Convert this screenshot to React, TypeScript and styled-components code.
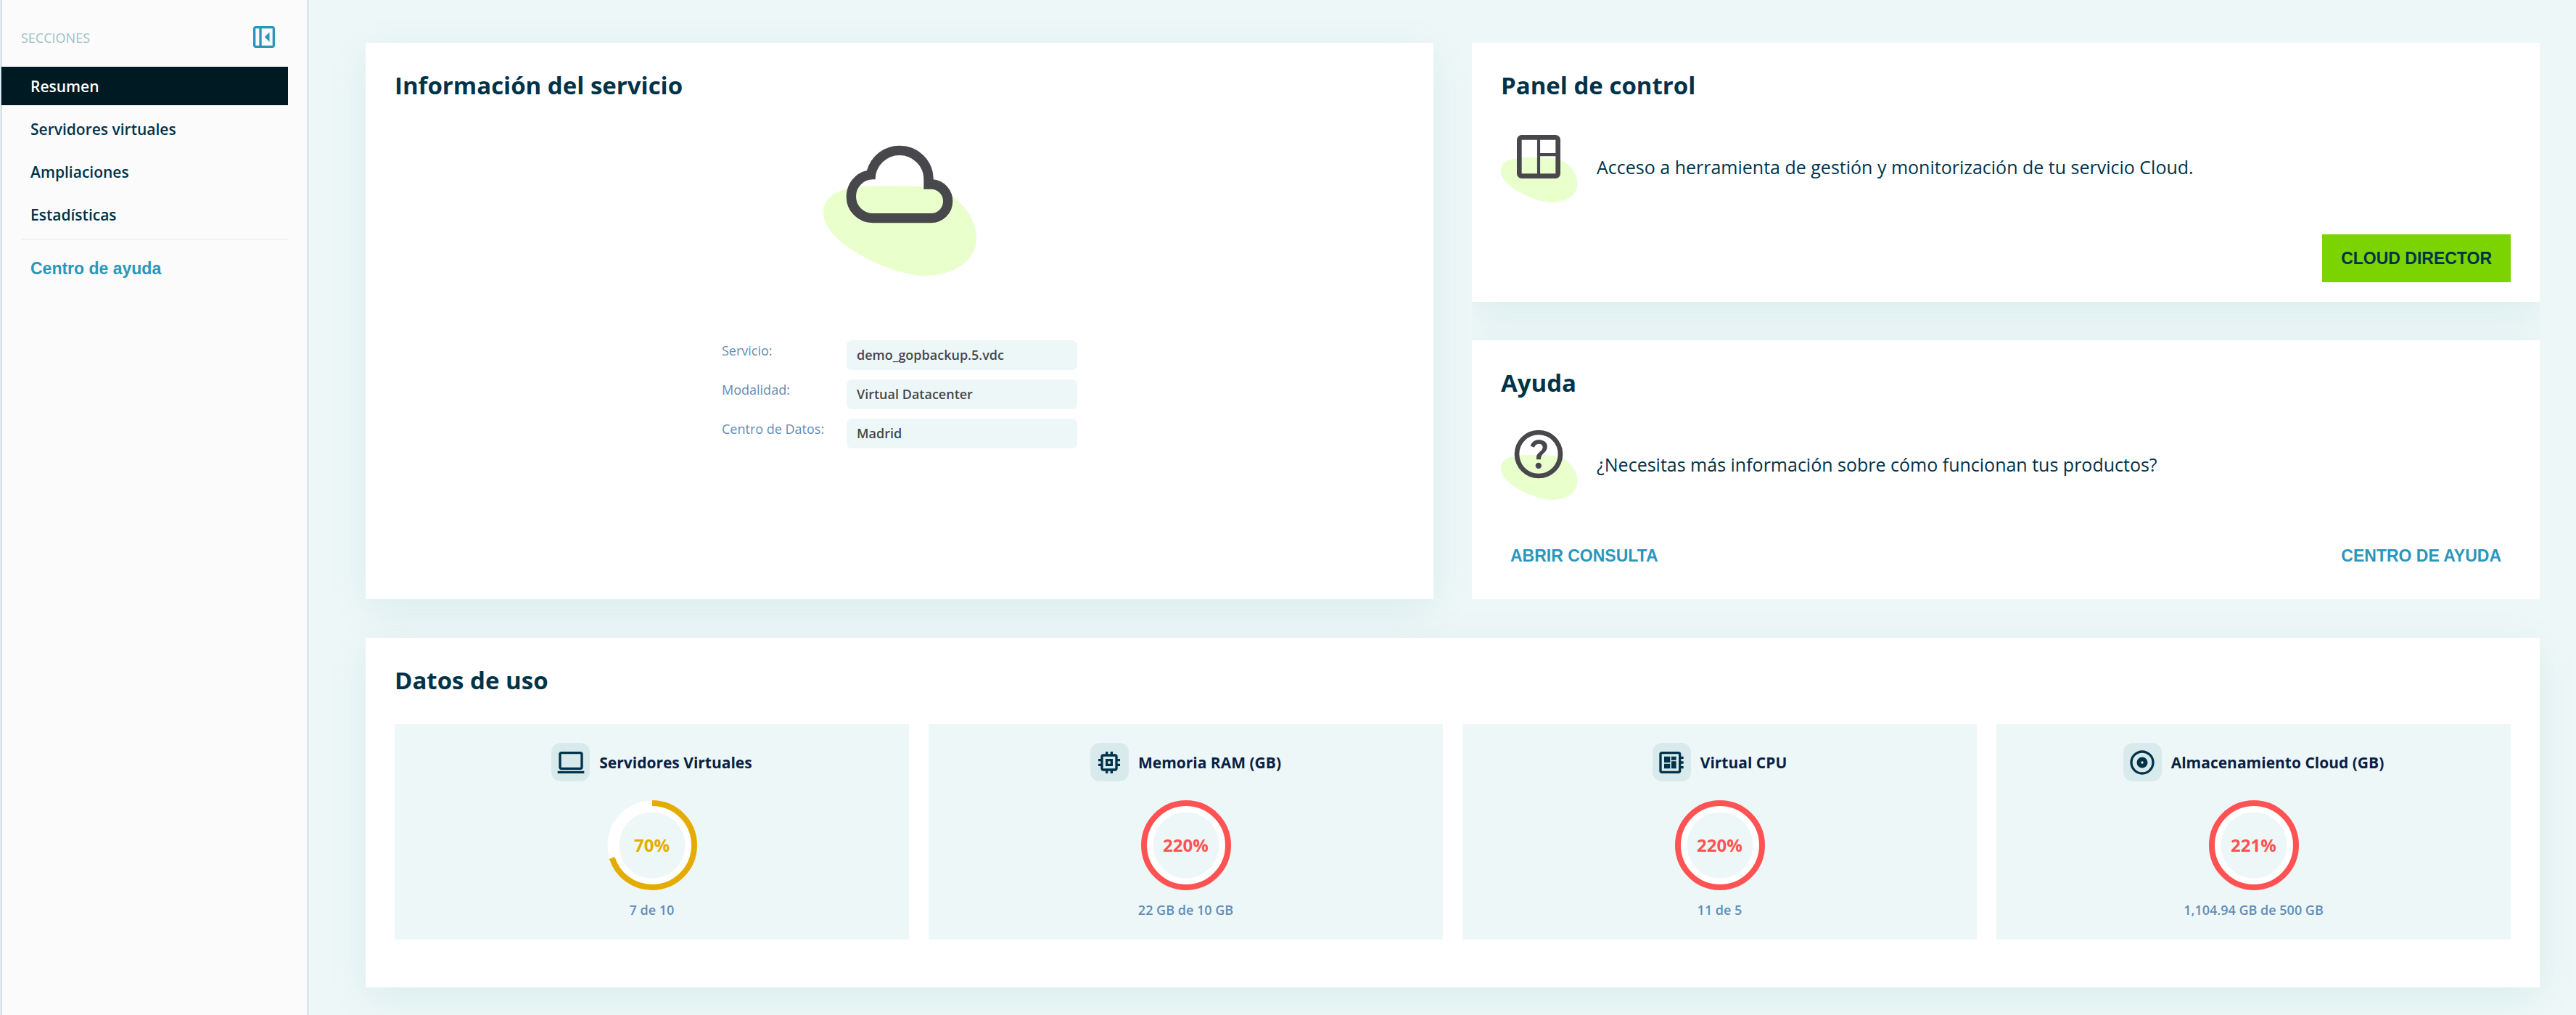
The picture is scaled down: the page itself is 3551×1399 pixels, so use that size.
import React from "react";
import styled, { createGlobalStyle } from "styled-components";

const sans = `"Open Sans", "Noto Sans", sans-serif`;
const arial = `"Liberation Sans", Arial, sans-serif`;

const GlobalStyle = createGlobalStyle`
  *, *::before, *::after { box-sizing: border-box; }
  body { margin: 0; background: #eef7f8; font-family: ${sans}; color: #003349; }
  h2, h3, p, ul, dl, dd { margin: 0; padding: 0; }
`;

const Page = styled.div`
  display: flex;
  min-height: 100vh;
  padding-left: 1px;
`;

const Sidebar = styled.aside`
  flex: 0 0 424px;
  background: #fbfbfb;
  border: solid #9dc0c9;
  border-width: 0 1px;
  padding: 31px 27px 0 0;
`;

const SidebarHead = styled.div`
  display: flex;
  align-items: center;
  justify-content: space-between;
  height: 40px;
  margin-bottom: 21px;
  padding: 0 13px 0 27px;
`;

const SidebarLabel = styled.span`
  padding-top: 2px;
  font-size: 18px;
  line-height: 24px;
  color: #9dc0c9;
`;

const IconButton = styled.button`
  display: flex;
  border: 0;
  padding: 0;
  background: none;
  color: #2a96bb;
  cursor: pointer;
`;

const Menu = styled.ul`
  display: flex;
  flex-direction: column;
  gap: 6px;
  list-style: none;
`;

const MenuLink = styled.a<{ $active?: boolean }>`
  display: block;
  padding: 2px 0 0 40px;
  font-size: 21px;
  font-weight: 600;
  line-height: 51px;
  text-decoration: none;
  color: ${(p) => (p.$active ? "#ffffff" : "#003349")};
  background: ${(p) => (p.$active ? "#001a24" : "transparent")};
`;

const SidebarFoot = styled.div`
  margin: 7px 0 0 27px;
  padding: 26px 0 0 13px;
  border-top: 1px solid #dbe8ec;
`;

const TextLink = styled.a`
  font-family: ${arial};
  font-size: 23px;
  font-weight: 700;
  line-height: 28px;
  text-decoration: none;
  color: #2a96bb;
`;

const Main = styled.main`
  flex: 1;
  min-width: 0;
  display: flex;
  flex-direction: column;
  gap: 53px;
  padding: 59px 50px 40px 79px;
`;

const TopRow = styled.div`
  display: grid;
  grid-template-columns: 1fr 1fr;
  gap: 53px;
`;

const Stack = styled.div`
  display: flex;
  flex-direction: column;
  gap: 53px;
  overflow: hidden;
`;

const Card = styled.section`
  display: flex;
  flex-direction: column;
  padding: 37px 40px 27px;
  background: #ffffff;
  box-shadow: 0 13px 53px rgba(0, 128, 115, 0.09);
`;

const UsageCard = styled(Card)`
  padding-bottom: 66px;
`;

const Title = styled.h2`
  font-size: 33px;
  font-weight: 700;
  line-height: 44px;
  color: #003349;
`;

const InfoBody = styled.div`
  display: flex;
  flex-direction: column;
  align-items: center;
  padding-top: 34px;
`;

const Fields = styled.dl`
  display: grid;
  grid-template-columns: 172px 318px;
  row-gap: 13px;
  margin-top: 89px;
`;

const FieldName = styled.dt`
  font-size: 18px;
  line-height: 29px;
  color: #5f8db8;
`;

const FieldValue = styled.dd`
  padding-left: 14px;
  border-radius: 7px;
  background: #eef7f8;
  font-size: 18px;
  font-weight: 600;
  line-height: 41px;
  color: #48474c;
`;

const Notice = styled.div`
  display: flex;
  align-items: center;
  gap: 26px;
  margin-top: 35px;
`;

const NoticeText = styled.p`
  font-size: 25px;
  line-height: 32px;
`;

const Actions = styled.div`
  display: flex;
  justify-content: space-between;
  margin-top: 39px;
`;

const Button = styled.button<{ $solid?: boolean }>`
  height: 66px;
  margin-left: ${(p) => (p.$solid ? "auto" : "0")};
  padding: 0 ${(p) => (p.$solid ? "26px" : "13px")};
  border: 0;
  background: ${(p) => (p.$solid ? "#7bd300" : "none")};
  font-family: ${arial};
  font-size: 23px;
  font-weight: 700;
  color: ${(p) => (p.$solid ? "#003349" : "#2a96bb")};
  cursor: pointer;
`;

const Tiles = styled.div`
  display: grid;
  grid-template-columns: repeat(4, 1fr);
  gap: 27px;
  margin-top: 38px;
`;

const Tile = styled.article`
  display: flex;
  flex-direction: column;
  align-items: center;
  padding: 26px 0 27px;
  background: #eef7f8;
`;

const TileHead = styled.div`
  display: flex;
  align-items: center;
  gap: 13px;
`;

const IconBox = styled.span`
  display: flex;
  align-items: center;
  justify-content: center;
  width: 53px;
  height: 53px;
  border-radius: 13px;
  background: #d9eaec;
  color: #003349;
`;

const TileTitle = styled.h3`
  font-size: 21px;
  font-weight: 700;
  line-height: 28px;
  color: #0a1f44;
`;

const Ring = styled.div`
  display: grid;
  place-items: center;
  margin-top: 26px;

  > * { grid-area: 1 / 1; }
`;

const Percent = styled.strong<{ $color: string }>`
  font-size: 24px;
  font-weight: 700;
  line-height: 32px;
  color: ${(p) => p.$color};
`;

const Caption = styled.p`
  margin-top: 13px;
  font-size: 18px;
  font-weight: 600;
  line-height: 28px;
  color: #5f8db8;
`;

/* Icons */

const SYMBOLS = {
  panelClose:
    "M660-320v-320L500-480l160 160ZM200-120q-33 0-56.5-23.5T120-200v-560q0-33 23.5-56.5T200-840h560q33 0 56.5 23.5T840-760v560q0 33-23.5 56.5T760-120H200Zm120-80v-560H200v560h120Zm80 0h360v-560H400v560Z",
  cloud:
    "M260-160q-91 0-155.5-63T40-377q0-78 47-139t123-78q25-92 100-149t170-57q117 0 198.5 81.5T760-520q69 8 114.5 59.5T920-340q0 75-52.5 127.5T740-160H260Zm0-80h480q42 0 71-29t29-71q0-42-29-71t-71-29h-60v-80q0-83-58.5-141.5T480-720q-83 0-141.5 58.5T280-520h-20q-58 0-99 41t-41 99q0 58 41 99t99 41Z",
  dashboard:
    "M200-120q-33 0-56.5-23.5T120-200v-560q0-33 23.5-56.5T200-840h560q33 0 56.5 23.5T840-760v560q0 33-23.5 56.5T760-120H200Zm0-80h255v-560H200v560Zm305 0h255v-290H505v290Zm0-340h255v-220H505v220Z",
  help:
    "M478-240q21 0 35.5-14.5T528-290q0-21-14.5-35.5T478-340q-21 0-35.5 14.5T428-290q0 21 14.5 35.5T478-240Zm-36-154h74q0-33 7.5-52t42.5-52q26-26 41-49.5t15-56.5q0-56-41-86t-97-30q-57 0-92.5 30T342-618l66 26q5-18 22.5-39t53.5-21q32 0 48 17.5t16 38.5q0 20-12 37.5T506-526q-44 39-54 59t-10 73Zm38 314q-83 0-156-31.5T197-197q-54-54-85.5-127T80-480q0-83 31.5-156T197-763q54-54 127-85.5T480-880q83 0 156 31.5T763-763q54 54 85.5 127T880-480q0 83-31.5 156T763-197q-54 54-127 85.5T480-80Zm0-80q134 0 227-93t93-227q0-134-93-227t-227-93q-134 0-227 93t-93 227q0 134 93 227t227 93Z",
  laptop:
    "M40-120v-80h880v80H40Zm120-120q-33 0-56.5-23.5T80-320v-440q0-33 23.5-56.5T160-840h640q33 0 56.5 23.5T880-760v440q0 33-23.5 56.5T800-240H160Zm0-80h640v-440H160v440Z",
  memory:
    "M360-360v-240h240v240H360Zm80-80h80v-80h-80v80Zm-80 320v-80h-80q-33 0-56.5-23.5T200-280v-80h-80v-80h80v-80h-80v-80h80v-80q0-33 23.5-56.5T280-760h80v-80h80v80h80v-80h80v80h80q33 0 56.5 23.5T760-680v80h80v80h-80v80h80v80h-80v80q0 33-23.5 56.5T680-200h-80v80h-80v-80h-80v80h-80Zm320-160v-400H280v400h400Z",
  board:
    "M160-120q-33 0-56.5-23.5T80-200v-560q0-33 23.5-56.5T160-840h560q33 0 56.5 23.5T800-760v80h80v80h-80v80h80v80h-80v80h80v80h-80v80q0 33-23.5 56.5T720-120H160Zm0-80h560v-560H160v560Zm80-80h200v-160H240v160Zm240-280h160v-120H480v120Zm-240 80h200v-200H240v200Zm240 200h160v-240H480v240Z",
  disc:
    "M480-300q75 0 127.5-52.5T660-480q0-75-52.5-127.5T480-660q-75 0-127.5 52.5T300-480q0 75 52.5 127.5T480-300Zm0-140q-17 0-28.5-11.5T440-480q0-17 11.5-28.5T480-520q17 0 28.5 11.5T520-480q0 17-11.5 28.5T480-440Zm0 360q-83 0-156-31.5T197-197q-54-54-85.5-127T80-480q0-83 31.5-156T197-763q54-54 127-85.5T480-880q83 0 156 31.5T763-763q54 54 85.5 127T880-480q0 83-31.5 156T763-197q-54 54-127 85.5T480-80Zm0-80q134 0 227-93t93-227q0-134-93-227t-227-93q-134 0-227 93t-93 227q0 134 93 227t227 93Z",
};

type SymbolName = keyof typeof SYMBOLS;

const Icon = ({ name, size }: { name: SymbolName; size: number }) => (
  <svg width={size} height={size} viewBox="0 -960 960 960" fill="currentColor" aria-hidden="true">
    <path fillRule="evenodd" d={SYMBOLS[name]} />
  </svg>
);

const BLOB =
  "M0 38C0 6 35 0 84 0C150 0 168 3 187 22C203 38 211 54 211 72C211 106 176 124 140 124C92 124 0 78 0 38Z";

const CloudArt = () => (
  <svg width="211" height="206" viewBox="0 0 211 206" aria-hidden="true">
    <path d={BLOB} transform="translate(0 82)" fill="#e9ffcc" />
    <svg x="25" y="0" width="160" height="160" viewBox="0 -960 960 960">
      <path d={SYMBOLS.cloud} fill="#48474c" />
    </svg>
  </svg>
);

const NoticeArt = ({ name }: { name: SymbolName }) => (
  <svg width="106" height="109" viewBox="0 0 106 109" aria-hidden="true">
    <path d={BLOB} transform="translate(0 42) scale(0.5)" fill="#e9ffcc" />
    <svg x="12" y="1" width="80" height="80" viewBox="0 -960 960 960">
      <path fillRule="evenodd" d={SYMBOLS[name]} fill="#48474c" />
    </svg>
  </svg>
);

const RADIUS = 58;
const LENGTH = 2 * Math.PI * RADIUS;

const Gauge = ({ value, color }: { value: number; color: string }) => (
  <Ring>
    <svg width="124" height="124" viewBox="0 0 124 124" fill="none" aria-hidden="true">
      <circle cx="62" cy="62" r="53.5" stroke="#ffffff" strokeWidth="16" />
      <circle
        cx="62"
        cy="62"
        r={RADIUS}
        stroke={color}
        strokeWidth="8"
        strokeDasharray={`${(LENGTH * Math.min(value, 100)) / 100} ${LENGTH}`}
        transform="rotate(-90 62 62)"
      />
    </svg>
    <Percent $color={color}>{value}%</Percent>
  </Ring>
);

const sections = ["Resumen", "Servidores virtuales", "Ampliaciones", "Estadísticas"];

const fields = [
  ["Servicio:", "demo_gopbackup.5.vdc"],
  ["Modalidad:", "Virtual Datacenter"],
  ["Centro de Datos:", "Madrid"],
];

const usage: { icon: SymbolName; title: string; value: number; color: string; detail: string }[] = [
  { icon: "laptop", title: "Servidores Virtuales", value: 70, color: "#e5ac00", detail: "7 de 10" },
  { icon: "memory", title: "Memoria RAM (GB)", value: 220, color: "#ff5252", detail: "22 GB de 10 GB" },
  { icon: "board", title: "Virtual CPU", value: 220, color: "#ff5252", detail: "11 de 5" },
  { icon: "disc", title: "Almacenamiento Cloud (GB)", value: 221, color: "#ff5252", detail: "1,104.94 GB de 500 GB" },
];

export default function App() {
  return (
    <>
      <GlobalStyle />
      <Page>
        <Sidebar>
          <SidebarHead>
            <SidebarLabel>SECCIONES</SidebarLabel>
            <IconButton type="button" aria-label="Contraer menú">
              <Icon name="panelClose" size={40} />
            </IconButton>
          </SidebarHead>
          <nav>
            <Menu>
              {sections.map((name, i) => (
                <li key={name}>
                  <MenuLink href="#" $active={i === 0}>{name}</MenuLink>
                </li>
              ))}
            </Menu>
          </nav>
          <SidebarFoot>
            <TextLink href="#">Centro de ayuda</TextLink>
          </SidebarFoot>
        </Sidebar>
        <Main>
          <TopRow>
            <Card>
              <Title>Información del servicio</Title>
              <InfoBody>
                <CloudArt />
                <Fields>
                  {fields.map(([name, value]) => (
                    <React.Fragment key={name}>
                      <FieldName>{name}</FieldName>
                      <FieldValue>{value}</FieldValue>
                    </React.Fragment>
                  ))}
                </Fields>
              </InfoBody>
            </Card>
            <Stack>
              <Card>
                <Title>Panel de control</Title>
                <Notice>
                  <NoticeArt name="dashboard" />
                  <NoticeText>Acceso a herramienta de gestión y monitorización de tu servicio Cloud.</NoticeText>
                </Notice>
                <Actions>
                  <Button type="button" $solid>CLOUD DIRECTOR</Button>
                </Actions>
              </Card>
              <Card>
                <Title>Ayuda</Title>
                <Notice>
                  <NoticeArt name="help" />
                  <NoticeText>¿Necesitas más información sobre cómo funcionan tus productos?</NoticeText>
                </Notice>
                <Actions>
                  <Button type="button">ABRIR CONSULTA</Button>
                  <Button type="button">CENTRO DE AYUDA</Button>
                </Actions>
              </Card>
            </Stack>
          </TopRow>
          <UsageCard>
            <Title>Datos de uso</Title>
            <Tiles>
              {usage.map((item) => (
                <Tile key={item.title}>
                  <TileHead>
                    <IconBox>
                      <Icon name={item.icon} size={40} />
                    </IconBox>
                    <TileTitle>{item.title}</TileTitle>
                  </TileHead>
                  <Gauge value={item.value} color={item.color} />
                  <Caption>{item.detail}</Caption>
                </Tile>
              ))}
            </Tiles>
          </UsageCard>
        </Main>
      </Page>
    </>
  );
}
